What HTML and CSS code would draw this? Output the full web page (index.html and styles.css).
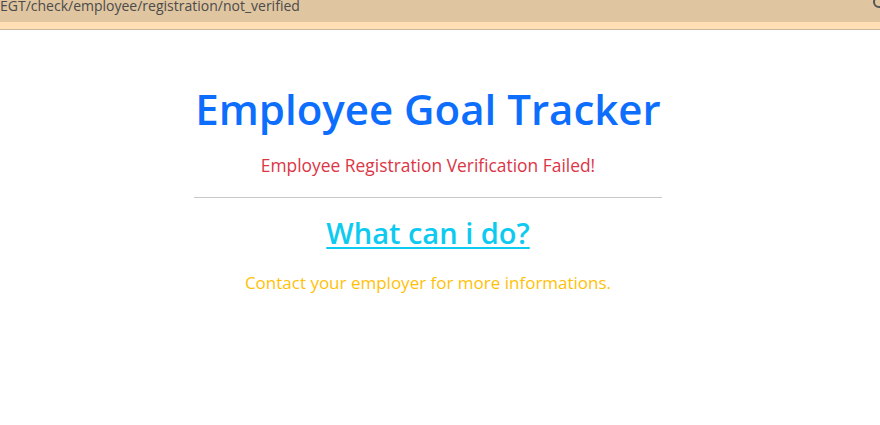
FILE: index.html
```html
<!DOCTYPE html>
<html>
<head>
<meta charset="utf-8">
<link rel="stylesheet" href="styles.css">
</head>
<body>
<div class="topbar">
  <span class="url">EGT/check/employee/registration/not_verified</span>
  <span class="close-icon"></span>
</div>
<div class="strip"></div>
<main class="page">
  <div class="box">
    <h1 class="title">Employee Goal Tracker</h1>
    <p class="failed">Employee Registration Verification Failed!</p>
    <hr class="rule">
    <h2 class="help"><a href="#" class="help-link">What can i do?</a></h2>
    <p class="contact">Contact your employer for more informations.</p>
  </div>
</main>
</body>
</html>
```
FILE: styles.css
```css
html, body { margin: 0; padding: 0; background: #fff; }
body { font-family: "Open Sans", "Noto Sans", sans-serif; }
.topbar {
  height: 22px;
  background: #dfc5a0;
  display: flex;
  justify-content: space-between;
  align-items: flex-start;
  overflow: hidden;
}
.url {
  font-size: 14px;
  line-height: 14px;
  color: #4b4b4b;
  margin-top: -1px;
}
.close-icon {
  width: 8px; height: 8px;
  border: 2px solid #555;
  border-radius: 50%;
  margin-top: -4px;
  margin-right: -5px;
}
.strip {
  height: 7px;
  background: #ffdfb3;
  border-bottom: 1px solid #c9b69a;
}
.page { display: flex; padding-left: 194px; }
.box { width: 468px; text-align: center; }
.title {
  margin: 54px 0 0;
  font-size: 42px;
  line-height: 50px;
  font-weight: 600;
  color: #0d6efd;
}
.failed {
  margin: 19px 0 0;
  font-size: 17.4px;
  line-height: 24px;
  color: #dc3545;
}
.rule {
  margin: 20px 0 0;
  border: 0;
  border-top: 1px solid #c8c8c8;
}
.help {
  margin: 17px 0 0;
  font-size: 29px;
  line-height: 36px;
  font-weight: 600;
}
.help-link { color: #0dcaf0; text-decoration: underline; text-underline-offset: 3px; text-decoration-thickness: 2px; }
.contact {
  margin: 20px 0 0;
  font-size: 17px;
  line-height: 24px;
  color: #ffc107;
}
```
